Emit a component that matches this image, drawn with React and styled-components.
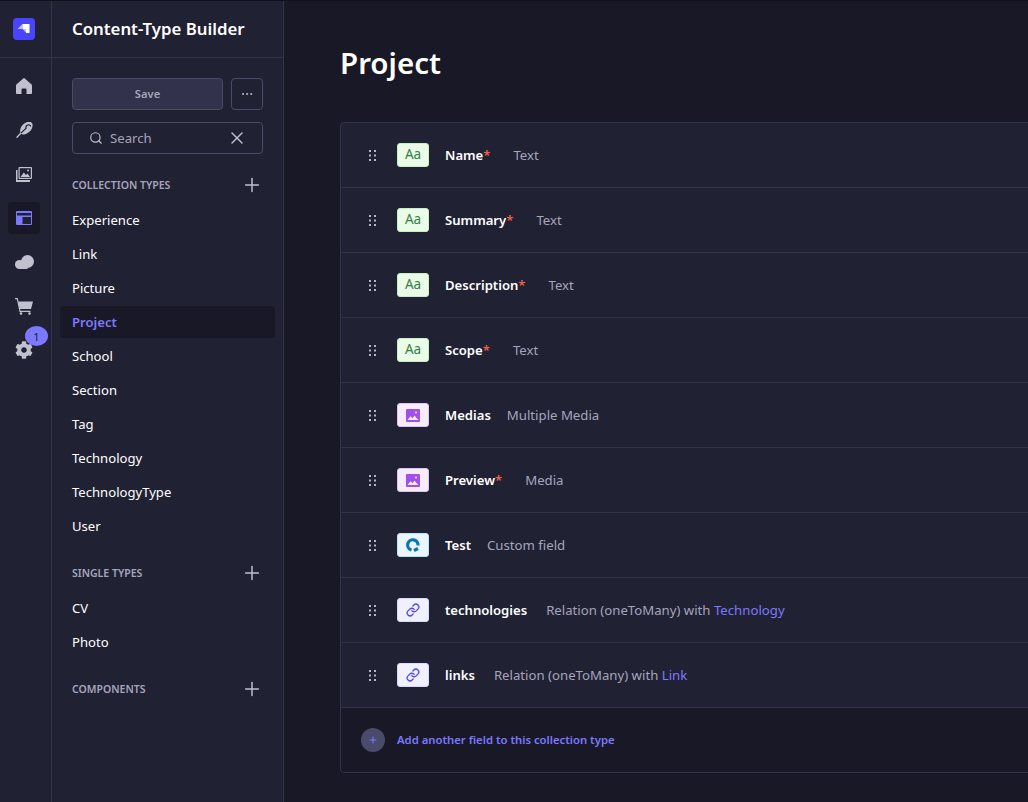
import styled, { createGlobalStyle } from 'styled-components';
import { Search, X, Plus, Ellipsis, Link as LinkIcon } from 'lucide-react';
import { FaCog } from 'react-icons/fa';

const GlobalStyle = createGlobalStyle`
  html, body {
    background: #181826;
    height: 100%;
    margin: 0;
    overflow: hidden;
  }
  body {
    color: #ffffff;
    font-family: "Noto Sans", "Open Sans", sans-serif;
  }
  * { box-sizing: border-box; }
`;

const collectionTypes = ['Experience', 'Link', 'Picture', 'Project', 'School', 'Section', 'Tag', 'Technology', 'TechnologyType', 'User'];
const singleTypes = ['CV', 'Photo'];

const fields = [
  { name: 'Name', required: true, type: 'Text', kind: 'text' },
  { name: 'Summary', required: true, type: 'Text', kind: 'text' },
  { name: 'Description', required: true, type: 'Text', kind: 'text' },
  { name: 'Scope', required: true, type: 'Text', kind: 'text' },
  { name: 'Medias', type: 'Multiple Media', kind: 'media' },
  { name: 'Preview', required: true, type: 'Media', kind: 'media' },
  { name: 'Test', type: 'Custom field', kind: 'custom' },
  { name: 'technologies', type: 'Relation (oneToMany) with ', target: 'Technology', kind: 'relation' },
  { name: 'links', type: 'Relation (oneToMany) with ', target: 'Link', kind: 'relation' },
];

function Logo() {
  return <svg width="22" height="22" viewBox="0 0 22 22">
    <rect width="22" height="22" rx="4" fill="#4945ff" />
    <path fill="#fff" d="M9.500 6H16.500V15H13V11H9.500Z" />
    <path fill="#fff" opacity="0.65" d="M9.500 6V11H4.500ZM9.500 11H13V14.500Z" />
  </svg>;
}

function HomeGlyph() {
  return <svg width="16" height="16" viewBox="0 0 16 16" fill="#c0c0cf">
    <path d="M7.200.4a1.200 1.200 0 0 1 1.600 0l6.800 6.200a1.200 1.200 0 0 1 .4.900V15a1 1 0 0 1-1 1h-4.500v-4.500a1 1 0 0 0-1-1H6.500a1 1 0 0 0-1 1V16H1a1 1 0 0 1-1-1V7.500a1.200 1.200 0 0 1 .4-.900Z" />
  </svg>;
}

function FeatherGlyph() {
  return <svg width="17" height="17" viewBox="0 1 17 17" fill="none">
    <path fill="#c0c0cf" d="M4.500 12.200C3 8 6 3 10.500 1.200 13 .2 16 .4 16.500 3.500 17 7 15 10.500 10.500 12.800 8.500 13.800 6 13.700 4.500 12.200Z" />
    <path stroke="#c0c0cf" strokeWidth="1.400" strokeLinecap="round" d="M1 16.200 5 12" />
    <path stroke="#212134" strokeWidth="1.100" d="M5 12 10.500 6.800M9.800 7.200C9.500 3.800 14 2.600 14.800 5.500" />
  </svg>;
}

function ImagesGlyph() {
  return <svg width="16" height="15" viewBox="0 0 16 15">
    <path fill="#c0c0cf" d="M0 3h1.500v10H14v1.500a.5.500 0 0 1-.5.500H.5a.5.500 0 0 1-.5-.5Z" />
    <rect x="2.500" width="13.500" height="12" rx="1" fill="#c0c0cf" />
    <rect x="3.700" y="1.200" width="11.100" height="9.600" fill="#212134" />
    <path fill="#c0c0cf" d="M4.500 10 7.800 5.500 10 8l1.500-1.500L14 10Z" />
    <circle cx="12" cy="3.500" r="1" fill="#c0c0cf" />
  </svg>;
}

function LayoutGlyph() {
  return <svg width="16" height="14" viewBox="0 0 16 14">
    <rect width="16" height="14" rx="1" fill="#7b79ff" />
    <rect x="1" y="2" width="14" height="2.500" fill="#212134" />
    <rect x="6.500" y="6" width="8.500" height="7" fill="#212134" />
  </svg>;
}

function CloudGlyph() {
  return <svg width="19" height="14" viewBox="0 0 19 14" fill="#c0c0cf">
    <circle cx="12.500" cy="6.500" r="6.500" />
    <circle cx="4.500" cy="9.500" r="4.500" />
    <rect x="4.500" y="8" width="8" height="6" />
  </svg>;
}

function CartGlyph() {
  return <svg width="18" height="17" viewBox="0 0 18 17" fill="#c0c0cf">
    <path fill="none" stroke="#c0c0cf" strokeWidth="1.200" d="M0 .7h2.300L5 13.300h10.500" />
    <path d="M3.200 3.500H18l-2 7.500H4.700Z" />
    <circle cx="6" cy="15.500" r="1.300" />
    <circle cx="14.500" cy="15.500" r="1.300" />
  </svg>;
}

function DragHandle() {
  return <svg width="7" height="11" viewBox="0 0 7 11" fill="#b4b4c6">
    <rect x="0" y="0" width="2" height="2" />
    <rect x="5" y="0" width="2" height="2" />
    <rect x="0" y="4.500" width="2" height="2" />
    <rect x="5" y="4.500" width="2" height="2" />
    <rect x="0" y="9" width="2" height="2" />
    <rect x="5" y="9" width="2" height="2" />
  </svg>;
}

function MediaGlyph() {
  return <svg width="14" height="13" viewBox="0 0 14 13">
    <rect width="14" height="13" rx="1" fill="#a44fea" />
    <path fill="#f6ecfc" d="M1.500 11l3-3.800 2 2 2-2.700 2 2.500 2 2Z" />
    <circle cx="10" cy="3.500" r="1" fill="#f6ecfc" />
  </svg>;
}

function CustomGlyph() {
  return <svg width="16" height="16" viewBox="0 0 16 16" fill="none" stroke="#0c75af" strokeWidth="3.200">
    <path d="M13 8.500A5.200 5.200 0 1 0 6.500 13" />
    <path d="M9 13.500 13 11.500" />
  </svg>;
}

function FieldIcon({ kind }) {
  if (kind === 'text') return <IconBox $kind={kind}><AaText>Aa</AaText></IconBox>;
  if (kind === 'media') return <IconBox $kind={kind}><MediaGlyph /></IconBox>;
  if (kind === 'custom') return <IconBox $kind={kind}><CustomGlyph /></IconBox>;
  return <IconBox $kind={kind}><LinkIcon size={14} color="#4945ff" strokeWidth={2.2} /></IconBox>;
}

function SideSection({ title, items }) {
  return <Section>
    <SectionHead>
      <SectionTitle>{title}</SectionTitle>
      <Plus size={22} color="#c0c0cf" strokeWidth={1.6} />
    </SectionHead>
    {items && <TypeList>
      {items.map((item) => <TypeItem key={item} $active={item === 'Project'}>{item}</TypeItem>)}
    </TypeList>}
  </Section>;
}

export default function App() {
  return <Page>
    <GlobalStyle />
    <MainNav>
      <NavLogo><Logo /></NavLogo>
      <NavIcons>
        <NavItem><HomeGlyph /></NavItem>
        <NavItem><FeatherGlyph /></NavItem>
        <NavItem><ImagesGlyph /></NavItem>
        <NavItem $active><LayoutGlyph /></NavItem>
        <NavItem><CloudGlyph /></NavItem>
        <NavItem><CartGlyph /></NavItem>
        <NavItem>
          <FaCog size={18} />
          <NavBadge>1</NavBadge>
        </NavItem>
      </NavIcons>
    </MainNav>
    <SubNav>
      <SubNavHeader>Content-Type Builder</SubNavHeader>
      <SubNavBody>
        <Actions>
          <SaveButton>Save</SaveButton>
          <MoreButton><Ellipsis size={14} color="#c0c0cf" strokeWidth={1.6} /></MoreButton>
        </Actions>
        <SearchBox>
          <Search size={14} color="#c0c0cf" strokeWidth={2} />
          <SearchText>Search</SearchText>
          <X size={20} color="#c0c0cf" strokeWidth={1.7} />
        </SearchBox>
        <SideSection title="COLLECTION TYPES" items={collectionTypes} />
        <SideSection title="SINGLE TYPES" items={singleTypes} />
        <SideSection title="COMPONENTS" />
      </SubNavBody>
    </SubNav>
    <Main>
      <Title>Project</Title>
      <Card>
        {fields.map((field) => <FieldRow key={field.name}>
          <DragHandle />
          <FieldIcon kind={field.kind} />
          <FieldName $relation={!!field.target}>
            {field.name}
            {field.required && <Required>*</Required>}
          </FieldName>
          <FieldType>
            {field.type}
            {field.target && <Target>{field.target}</Target>}
          </FieldType>
        </FieldRow>)}
        <AddRow>
          <AddCircle><Plus size={10} color="#7b79ff" strokeWidth={2.5} /></AddCircle>
          <AddText>Add another field to this collection type</AddText>
        </AddRow>
      </Card>
    </Main>
  </Page>;
}

const Page = styled.div`
  border-top: 1px solid #11111c;
  display: flex;
  height: 802px;
  overflow: hidden;
  width: 1028px;
`;

const MainNav = styled.nav`
  background: #212134;
  border-right: 1px solid #32324d;
  flex: 0 0 52px;
`;

const NavLogo = styled.div`
  align-items: center;
  border-bottom: 1px solid #32324d;
  display: flex;
  height: 57px;
  justify-content: center;
  padding-right: 3px;
`;

const NavIcons = styled.div`
  align-items: center;
  display: flex;
  flex-direction: column;
  gap: 12px;
  padding: 12px 3px 0 0;
`;

const NavItem = styled.div`
  align-items: center;
  background: ${(p) => (p.$active ? '#181826' : 'transparent')};
  border-radius: 4px;
  color: #c0c0cf;
  display: flex;
  height: 32px;
  justify-content: center;
  position: relative;
  width: 32px;
`;

const NavBadge = styled.span`
  align-items: center;
  background: #7b79ff;
  border-radius: 50%;
  color: #212134;
  display: flex;
  font-size: 11px;
  height: 20px;
  justify-content: center;
  left: 17px;
  position: absolute;
  top: -8px;
  width: 23px;
`;

const SubNav = styled.aside`
  background: #212134;
  border-right: 1px solid #32324d;
  flex: 0 0 232px;
`;

const SubNavHeader = styled.div`
  align-items: center;
  border-bottom: 1px solid #32324d;
  display: flex;
  font-size: 16.8px;
  font-weight: 600;
  height: 57px;
  padding-bottom: 1px;
  padding-left: 20px;
`;

const SubNavBody = styled.div`
  padding: 20px 8px 0;
`;

const Actions = styled.div`
  display: flex;
  gap: 8px;
  padding: 0 12px;
`;

const SaveButton = styled.div`
  align-items: center;
  background: #32324d;
  border: 1px solid #4a4a6a;
  border-radius: 4px;
  color: #a5a5ba;
  display: flex;
  flex: 1;
  font-size: 11.2px;
  font-weight: 600;
  height: 32px;
  justify-content: center;
  padding-bottom: 2px;
`;

const MoreButton = styled.div`
  align-items: center;
  border: 1px solid #4a4a6a;
  border-radius: 4px;
  display: flex;
  height: 32px;
  justify-content: center;
  width: 32px;
`;

const SearchBox = styled.div`
  align-items: center;
  border: 1px solid #4a4a6a;
  border-radius: 4px;
  display: flex;
  height: 32px;
  margin: 12px 12px 0;
  padding: 0 15px 0 16px;
`;

const SearchText = styled.span`
  color: #a5a5ba;
  flex: 1;
  font-size: 13.2px;
  margin-left: 7px;
`;

const Section = styled.section`
  margin-top: 20px;

  & + & {
    margin-top: 18px;
  }
`;

const SectionHead = styled.div`
  align-items: center;
  display: flex;
  height: 22px;
  justify-content: space-between;
  padding: 0 12px;
`;

const SectionTitle = styled.span`
  color: #a5a5ba;
  font-size: 10.5px;
  font-weight: 600;
`;

const TypeList = styled.div`
  display: flex;
  flex-direction: column;
  margin-top: 7px;
  padding-bottom: 1px;
`;

const TypeItem = styled.div`
  align-items: center;
  background: ${(p) => (p.$active ? '#181826' : 'transparent')};
  border-radius: 4px;
  color: ${(p) => (p.$active ? '#7b79ff' : '#ffffff')};
  display: flex;
  font-size: 13.1px;
  font-weight: ${(p) => (p.$active ? 600 : 400)};
  height: 32px;
  margin: 1px 0;
  padding-left: 12px;
`;

const Main = styled.main`
  background: #181826;
  flex: 1;
  min-width: 0;
  padding-left: 56px;
`;

const Title = styled.h1`
  font-size: 29.5px;
  font-weight: 600;
  line-height: 40px;
  margin: 0;
  padding-top: 42px;
`;

const Card = styled.div`
  background: #212134;
  border: 1px solid #32324d;
  border-radius: 4px;
  margin-top: 39px;
  width: 1000px;
`;

const FieldRow = styled.div`
  align-items: center;
  border-bottom: 1px solid #32324d;
  display: flex;
  height: 65px;
  padding-left: 28px;
`;

const iconColors = {
  text: ['#eafbe7', '#c6f0c2'],
  media: ['#f6ecfc', '#e0c1f4'],
  custom: ['#eaf5ff', '#b8e1ff'],
  relation: ['#f0f0ff', '#d9d8ff'],
};

const IconBox = styled.div`
  align-items: center;
  background: ${(p) => iconColors[p.$kind][0]};
  border: 1px solid ${(p) => iconColors[p.$kind][1]};
  border-radius: 3px;
  display: flex;
  flex: 0 0 32px;
  height: 24px;
  justify-content: center;
  margin: 0 16px 0 21px;
`;

const AaText = styled.span`
  color: #328048;
  font-size: 13.5px;
  font-weight: 400;
  line-height: 1;
`;

const FieldName = styled.span`
  font-size: 13.1px;
  font-weight: 600;
  margin-right: ${(p) => (p.$relation ? 19 : 16)}px;
`;

const Required = styled.span`
  color: #ee5e52;
  margin-right: 7px;
`;

const FieldType = styled.span`
  color: #a5a5ba;
  font-size: 13.2px;
`;

const Target = styled.span`
  color: #7b79ff;
`;

const AddRow = styled.div`
  align-items: center;
  background: #181826;
  border-radius: 0 0 4px 4px;
  display: flex;
  gap: 12px;
  height: 64px;
  padding-left: 20px;
`;

const AddCircle = styled.div`
  align-items: center;
  background: #4a4a6a;
  border-radius: 50%;
  display: flex;
  height: 24px;
  justify-content: center;
  width: 24px;
`;

const AddText = styled.span`
  color: #7b79ff;
  font-size: 11.3px;
  font-weight: 600;
  padding-bottom: 2px;
`;
